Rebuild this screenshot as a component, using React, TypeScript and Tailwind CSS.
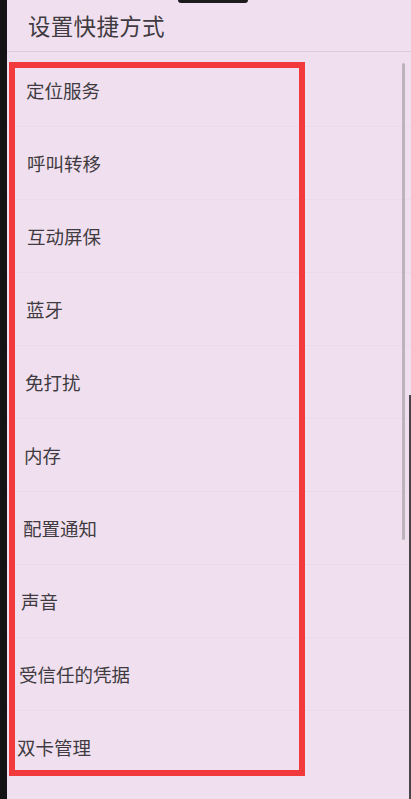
import React from "react";

// Settings "shortcut" picker photographed on a phone, with the red annotation box on top.

const items = [
  { label: "定位服务", pad: "pl-[19px]" },
  { label: "呼叫转移", pad: "pl-[20px]" },
  { label: "互动屏保", pad: "pl-[20px]" },
  { label: "蓝牙", pad: "pl-[19px]" },
  { label: "免打扰", pad: "pl-[18px]" },
  { label: "内存", pad: "pl-[17px]" },
  { label: "配置通知", pad: "pl-[16px]" },
  { label: "声音", pad: "pl-[14px]" },
  { label: "受信任的凭据", pad: "pl-[12px]" },
  { label: "双卡管理", pad: "pl-[10px]" },
];

export default function App() {
  return (
    <div
      className="relative flex h-[799px] w-[411px] overflow-hidden bg-[#f0e0ef] text-[#403b41]"
      style={{ fontFamily: '"Noto Sans CJK SC", "Noto Sans", sans-serif' }}
    >
      {/* phone bezel */}
      <div className="w-[7px] shrink-0 bg-[#141214]" />

      <div className="flex flex-1 flex-col">
        <header className="flex h-[52px] items-center border-b border-[#dccbdb] pl-[21px]">
          <h1 className="text-[22.5px] leading-none tracking-[0.3px]">设置快捷方式</h1>
        </header>

        <ul className="flex flex-col pt-[2px]">
          {items.map((it, i) => (
            <li
              key={it.label}
              className={`flex h-[73px] items-center ${it.pad} ${
                i < items.length - 1 ? "border-b border-[#ecdaeb]" : ""
              }`}
            >
              <span className="text-[18.5px] leading-none">{it.label}</span>
            </li>
          ))}
        </ul>
      </div>

      {/* top notch */}
      <div className="absolute left-[178px] top-0 h-[3px] w-[70px] rounded-b-sm bg-[#1c1a1c]" />

      {/* scrollbar */}
      <div className="absolute left-[402px] top-[63px] h-[477px] w-[3px] rounded-full bg-[#bdb3bd]" />

      {/* right screen edge */}
      <div className="absolute right-0 top-[395px] h-[404px] w-[2px] bg-[#4a444a]" />

      {/* red annotation box */}
      <div className="absolute left-[9px] top-[62px] h-[714px] w-[296px] border-[6px] border-[#f2393c]" />
    </div>
  );
}
